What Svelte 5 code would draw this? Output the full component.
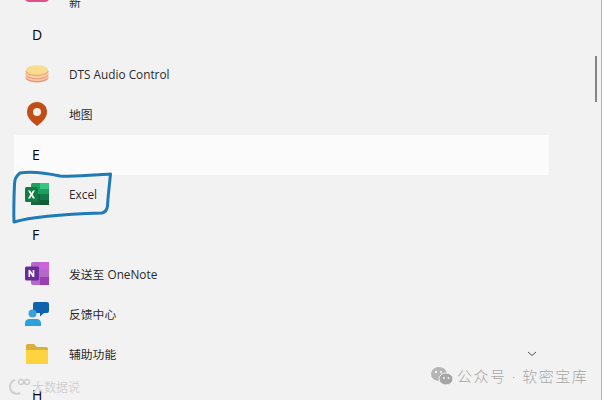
<script>
	const rows = [
		{ type: "app", icon: "pink", name: "新", first: true },
		{ type: "letter", name: "D" },
		{ type: "app", icon: "dts", name: "DTS Audio Control" },
		{ type: "app", icon: "map", name: "地图", cjk: true },
		{ type: "letter", name: "E", active: true },
		{ type: "app", icon: "excel", name: "Excel" },
		{ type: "letter", name: "F" },
		{ type: "app", icon: "onenote", name: "发送至 OneNote", cjk: true },
		{ type: "app", icon: "feedback", name: "反馈中心", cjk: true },
		{ type: "app", icon: "folder", name: "辅助功能", cjk: true, more: true },
		{ type: "letter", name: "H" },
	]
</script>

<div class="page">
	<div class="list">
		{#each rows as row}
			{#if row.type === "letter"}
				<div class="row letter" class:active={row.active}>{row.name}</div>
			{:else}
				<div class="row app">
					<svg class="icon" width="26" height="26" viewBox="0 0 26 26">
						{#if row.icon === "pink"}
							<path d="M1 8h24v9q0 4-4 4H5q-4 0-4-4z" fill="#e0508c" />
						{:else if row.icon === "dts"}
							<ellipse cx="13" cy="16.500" rx="11.500" ry="5" fill="#ec9474" />
							<ellipse cx="13" cy="15" rx="11.500" ry="5" fill="#f9d2b4" />
							<ellipse cx="13" cy="13.500" rx="11.500" ry="5" fill="#ef9f7c" />
							<ellipse cx="13" cy="12" rx="11.500" ry="5" fill="#fbdcb4" />
							<ellipse cx="13" cy="10.500" rx="11.500" ry="5" fill="#f2ac78" />
							<ellipse cx="13" cy="9" rx="11" ry="4.800" fill="#f9dc90" />
						{:else if row.icon === "map"}
							<path d="M13 1C7 1 3 5.400 3 11c0 6 5 10 10 14 5-4 10-8 10-14 0-5.600-4-10-10-10z" fill="#c24e17" />
							<circle cx="13" cy="11" r="4" fill="#fbeee6" />
						{:else if row.icon === "excel"}
							<rect x="7" y="2" width="18" height="22" rx="1.500" fill="#1f9e62" />
							<rect x="16" y="2" width="9" height="6" fill="#37c47f" />
							<rect x="16" y="13" width="9" height="6" fill="#127a48" />
							<rect x="7" y="13" width="9" height="11" fill="#17663f" />
							<rect x="16" y="19" width="9" height="5" fill="#0f5c36" />
							<rect x="1" y="6" width="13" height="15" rx="1.500" fill="#107c41" />
							<path d="M4 9.500h2.100l1.400 2.500 1.400-2.500H11l-2.400 4 2.400 4H8.900l-1.400-2.500L6.100 17.500H4l2.400-4z" fill="#fff" />
						{:else if row.icon === "onenote"}
							<rect x="7" y="1" width="18" height="23" rx="2" fill="#b469c9" />
							<rect x="16" y="1" width="9" height="8" fill="#ca64d8" />
							<rect x="16" y="16" width="9" height="8" fill="#9a3eb5" />
							<rect x="1" y="5.500" width="14" height="14" rx="1.500" fill="#6a2a98" />
							<path d="M4.500 16V9h1.700l2.500 4V9h1.600v7H8.700l-2.600-4.100V16z" fill="#fff" />
						{:else if row.icon === "feedback"}
							<path d="M11 1h12q2 0 2 2v7q0 2-2 2h-3l-4 3.500V12h-5q-2 0-2-2V3q0-2 2-2z" fill="#0f62ad" />
							<circle cx="8.500" cy="12.500" r="4" fill="#3ba3d8" />
							<path d="M1 25v-2.500q0-4.500 4.500-4.500h7q4.500 0 4.500 4.500V25z" fill="#2aa0dc" />
						{:else if row.icon === "folder"}
							<path d="M2 5q0-2 2-2h6l3 3h9q2 0 2 2v13q0 2-2 2H4q-2 0-2-2z" fill="#dcae3a" />
							<path d="M2 9h22v12q0 2-2 2H4q-2 0-2-2z" fill="#fdd33f" />
						{/if}
					</svg>
					<span class="name" class:first={row.first} class:cjk={row.cjk}>{row.name}</span>
					{#if row.more}
						<svg class="chevron" width="10" height="6" viewBox="0 0 10 6">
							<path d="M1 1l4 3.500L9 1" fill="none" stroke="#555" stroke-width="1" />
						</svg>
					{/if}
				</div>
			{/if}
		{/each}
	</div>

	<div class="scrollbar"></div>
	<div class="edge"></div>

	<!-- hand drawn marker around Excel -->
	<svg class="marker" width="120" height="60" viewBox="0 0 120 60">
		<path
			d="M20 5C16 8 14.500 11 14.500 16C14 28 13.500 42 14 54C34 48 70 46 102 45C106 44 107 42 107.500 38C108 28 109.500 16 110.500 6C94 7 76 9 60 8C46 5 32 3 20 5"
			fill="none"
			stroke="#1f7ab5"
			stroke-width="3"
			stroke-linecap="round"
			stroke-linejoin="round"
		/>
	</svg>

	<div class="mark-left">
		<svg width="26" height="20" viewBox="0 0 26 20">
			<path d="M9 3a7 7 0 1 0 5 13" fill="none" stroke="#cfcfcf" stroke-width="2" />
			<circle cx="15" cy="5" r="2.500" fill="none" stroke="#cfcfcf" stroke-width="1.500" />
			<circle cx="21" cy="5" r="2.500" fill="none" stroke="#cfcfcf" stroke-width="1.500" />
		</svg>
		<span>大数据说</span>
	</div>

	<div class="mark-right">
		<svg width="24" height="20" viewBox="0 0 24 20">
			<ellipse cx="9" cy="8" rx="8" ry="7" fill="#b5b5b5" />
			<ellipse cx="16" cy="13" rx="7" ry="6" fill="#a5a5a5" stroke="#f2f2f2" />
			<circle cx="6" cy="6" r="1.200" fill="#f2f2f2" />
			<circle cx="11" cy="6" r="1.200" fill="#f2f2f2" />
			<circle cx="14" cy="12" r="1" fill="#f2f2f2" />
			<circle cx="18.500" cy="12" r="1" fill="#f2f2f2" />
		</svg>
		<span>公众号 · 软密宝库</span>
	</div>
</div>

<style>
	:global(body) {
		margin: 0;
	}

	.page {
		position: relative;
		width: 609px;
		height: 400px;
		overflow: hidden;
		background: #f2f2f2;
		font-family: "Open Sans", "Noto Sans CJK SC", sans-serif;
		color: #1f1f1f;
	}

	.list {
		margin-top: -25px;
		padding-left: 14px;
		width: 535px;
	}

	.row {
		height: 40px;
		padding-bottom: 2px;
		display: flex;
		align-items: center;
		box-sizing: border-box;
	}

	.letter {
		padding-left: 18px;
		font-size: 14px;
		color: #000;
	}

	.letter.active {
		background: #fbfbfb;
	}

	.app {
		padding-left: 10px;
	}

	.icon {
		flex: none;
	}

	.name {
		margin-left: 19px;
		font-size: 11.8px;
		color: #2a2a2a;
	}

	.name.cjk {
		margin-bottom: 2px;
	}

	/* top row is cut by the window edge, label sits lower than its icon */
	.name.first {
		align-self: flex-end;
		margin-bottom: 3px;
	}

	.chevron {
		margin-left: auto;
		margin-right: 12px;
	}

	.scrollbar {
		position: absolute;
		left: 595px;
		top: 56px;
		width: 2px;
		height: 46px;
		background: #868686;
	}

	.edge {
		position: absolute;
		left: 601px;
		top: 0;
		bottom: 0;
		width: 8px;
		border-left: 1px solid #b4b4b4;
		background: #fff;
		box-sizing: border-box;
	}

	.marker {
		position: absolute;
		left: 0;
		top: 168px;
	}

	.mark-left {
		position: absolute;
		left: 6px;
		top: 377px;
		display: flex;
		align-items: center;
		font-size: 12px;
		color: #cfcfcf;
		text-shadow: 0 0 1px #fff;
	}

	.mark-right {
		position: absolute;
		left: 430px;
		top: 365px;
		display: flex;
		align-items: center;
		gap: 3px;
		font-size: 15px;
		font-weight: 300;
		letter-spacing: 1.5px;
		color: #a8a8a8;
	}
</style>
